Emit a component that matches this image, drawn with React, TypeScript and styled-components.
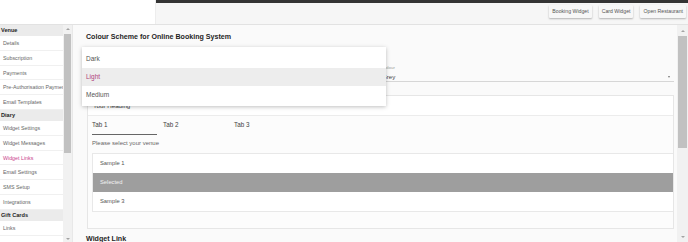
import React from "react";
import styled, { createGlobalStyle } from "styled-components";

const GlobalStyle = createGlobalStyle`
  html, body {
    margin: 0;
    padding: 0;
  }
  body {
    width: 688px;
    height: 242px;
    overflow: hidden;
    background: #ffffff;
    font-family: "Liberation Sans", Arial, sans-serif;
  }
  * {
    box-sizing: border-box;
  }
`;

const Page = styled.div`
  display: flex;
  flex-direction: column;
  width: 688px;
  height: 242px;
  overflow: hidden;
`;

const TopBar = styled.div`
  display: flex;
  height: 25px;
  border-bottom: 1px solid #e2e2e2;
`;

const LogoArea = styled.div`
  width: 156px;
  background: #ffffff;
  border-right: 1px solid #ededed;
`;

const Toolbar = styled.div`
  flex: 1;
  display: flex;
  flex-direction: column;
`;

const DarkStrip = styled.div`
  height: 3px;
  background: #343434;
`;

const ButtonBar = styled.div`
  flex: 1;
  display: flex;
  justify-content: flex-end;
  align-items: flex-start;
  gap: 7px;
  padding: 2px 2px 0 0;
  background: #f6f6f6;
`;

const ToolButton = styled.button`
  height: 13px;
  padding: 0 3px;
  border: none;
  border-radius: 1px;
  background: #f7f7f7;
  box-shadow: 0 1px 2px rgba(0, 0, 0, 0.28);
  font-family: inherit;
  font-size: 5.2px;
  color: #555;
  line-height: 13px;
  cursor: pointer;
`;

const Body = styled.div`
  flex: 1;
  display: flex;
  min-height: 0;
`;

const Sidebar = styled.div`
  width: 72px;
  display: flex;
`;

const SideList = styled.div`
  width: 63px;
  overflow: hidden;
  background: #ffffff;
`;

const SideHeader = styled.div`
  height: 11px;
  padding-left: 1px;
  background: #ebebeb;
  font-size: 5.6px;
  font-weight: bold;
  color: #1e1e1e;
  line-height: 11px;
  white-space: nowrap;
`;

const SideItem = styled.div<{ active?: boolean }>`
  height: 14.8px;
  padding-left: 3px;
  border-bottom: 1px solid #f0f0f0;
  font-size: 5.3px;
  color: ${(p) => (p.active ? "#c9428a" : "#666")};
  line-height: 14px;
  white-space: nowrap;
`;

const ScrollTrack = styled.div<{ w: number }>`
  width: ${(p) => p.w}px;
  display: flex;
  flex-direction: column;
  align-items: center;
  background: #f1f1f1;
`;

const ArrowBox = styled.div<{ h: number }>`
  height: ${(p) => p.h}px;
  width: 100%;
  display: flex;
  align-items: center;
  justify-content: center;
`;

const Arrow = styled.div<{ down?: boolean }>`
  width: 0;
  height: 0;
  border-left: 2px solid transparent;
  border-right: 2px solid transparent;
  ${(p) =>
    p.down
      ? "border-top: 2px solid #a3a3a3;"
      : "border-bottom: 2px solid #a3a3a3;"}
`;

const Thumb = styled.div<{ top: number; h: number }>`
  width: calc(100% - 2px);
  height: ${(p) => p.h}px;
  margin-top: ${(p) => p.top}px;
  background: #c1c1c1;
`;

const Spacer = styled.div`
  flex: 1;
`;

const Main = styled.div`
  flex: 1;
  display: flex;
  background: #fafafa;
  border-left: 1px solid #e8e8e8;
`;

const MainContent = styled.div`
  position: relative;
  flex: 1;
  overflow: hidden;
  padding: 7px 3px 0 9px;
`;

const SectionTitle = styled.div`
  padding-left: 4px;
  height: 10px;
  font-size: 7.1px;
  font-weight: bold;
  color: #1f1f1f;
  line-height: 10px;
  white-space: nowrap;
`;

const SelectRow = styled.div`
  display: flex;
  gap: 8px;
  margin-top: 23px;
`;

const SelectField = styled.div`
  position: relative;
  flex: 1;
  min-height: 17px;
  border-bottom: 1px solid #d6d6d6;
`;

const SelectLabel = styled.div`
  height: 6px;
  font-size: 4.4px;
  color: #9a9a9a;
  line-height: 6px;
`;

const SelectValue = styled.div`
  display: flex;
  align-items: center;
  justify-content: space-between;
  height: 9px;
  margin-top: 1px;
  padding-right: 4px;
  font-size: 6.2px;
  color: #444;
`;

const Caret = styled.div`
  width: 0;
  height: 0;
  border-left: 1.5px solid transparent;
  border-right: 1.5px solid transparent;
  border-top: 2px solid #777;
`;

const Preview = styled.div`
  margin: 13px 0 0 5px;
  border: 1px solid #e6e6e6;
  background: #fcfcfc;
  padding-bottom: 16px;
`;

const PreviewHeading = styled.div`
  height: 20px;
  padding-left: 5px;
  background: #ffffff;
  border-bottom: 1px solid #ececec;
  font-size: 6.2px;
  color: #444;
  line-height: 20px;
`;

const TabRow = styled.div`
  display: flex;
  height: 19px;
  padding-left: 4px;
`;

const Tab = styled.div<{ active?: boolean }>`
  position: relative;
  width: 71px;
  font-size: 6.3px;
  color: #444;
  line-height: 18px;

  &::after {
    content: "";
    display: ${(p) => (p.active ? "block" : "none")};
    position: absolute;
    left: 0;
    bottom: 0;
    width: 65px;
    height: 1px;
    background: #666;
  }
`;

const Hint = styled.div`
  padding-left: 4px;
  height: 16px;
  font-size: 6px;
  color: #666;
  line-height: 16px;
`;

const VenueList = styled.div`
  margin: 2px 0 0 4px;
  border: 1px solid #e8e8e8;
  border-right: none;
  background: #ffffff;
`;

const VenueRow = styled.div<{ selected?: boolean }>`
  height: 19px;
  padding-left: 7px;
  background: ${(p) => (p.selected ? "#9e9e9e" : "transparent")};
  font-size: 5.8px;
  color: ${(p) => (p.selected ? "#f2f2f2" : "#555")};
  line-height: 19px;
`;

const SubTitle = styled(SectionTitle)`
  margin-top: 5px;
`;

const Menu = styled.div`
  position: absolute;
  left: 9px;
  top: 22px;
  width: 304px;
  padding: 2.5px 0;
  background: #ffffff;
  box-shadow: 0 1px 4px rgba(0, 0, 0, 0.25);
`;

const MenuItem = styled.div<{ selected?: boolean }>`
  height: 18px;
  padding-left: 4px;
  background: ${(p) => (p.selected ? "#ededed" : "transparent")};
  font-size: 6.5px;
  color: ${(p) => (p.selected ? "#b0427c" : "#555")};
  line-height: 18px;
`;

const venueNav = ["Details", "Subscription", "Payments", "Pre-Authorisation Payments", "Email Templates"];
const diaryNav = [
  "Widget Settings",
  "Widget Messages",
  "Widget Links",
  "Email Settings",
  "SMS Setup",
  "Integrations",
];

const ScrollBar: React.FC<{ w: number; top: number; h: number; arrowH: number }> = ({
  w,
  top,
  h,
  arrowH,
}) => (
  <ScrollTrack w={w}>
    <ArrowBox h={arrowH}>
      <Arrow />
    </ArrowBox>
    <Thumb top={top} h={h} />
    <Spacer />
    <ArrowBox h={arrowH}>
      <Arrow down />
    </ArrowBox>
  </ScrollTrack>
);

const App: React.FC = () => {
  return (
    <Page>
      <GlobalStyle />
      <TopBar>
        <LogoArea />
        <Toolbar>
          <DarkStrip />
          <ButtonBar>
            <ToolButton>Booking Widget</ToolButton>
            <ToolButton>Card Widget</ToolButton>
            <ToolButton>Open Restaurant</ToolButton>
          </ButtonBar>
        </Toolbar>
      </TopBar>

      <Body>
        <Sidebar>
          <SideList>
            <SideHeader>Venue</SideHeader>
            {venueNav.map((item) => (
              <SideItem key={item}>{item}</SideItem>
            ))}
            <SideHeader>Diary</SideHeader>
            {diaryNav.map((item) => (
              <SideItem key={item} active={item === "Widget Links"}>
                {item}
              </SideItem>
            ))}
            <SideHeader>Gift Cards</SideHeader>
            <SideItem>Links</SideItem>
          </SideList>
          <ScrollBar w={9} arrowH={7} top={2} h={119} />
        </Sidebar>

        <Main>
          <MainContent>
            <SectionTitle>Colour Scheme for Online Booking System</SectionTitle>

            <SelectRow>
              {/* the scheme select sits under its open menu */}
              <SelectField />
              <SelectField>
                <SelectLabel>Colour</SelectLabel>
                <SelectValue>
                  Grey
                  <Caret />
                </SelectValue>
              </SelectField>
            </SelectRow>

            <Preview>
              <PreviewHeading>Your Heading</PreviewHeading>
              <TabRow>
                <Tab active>Tab 1</Tab>
                <Tab>Tab 2</Tab>
                <Tab>Tab 3</Tab>
              </TabRow>
              <Hint>Please select your venue</Hint>
              <VenueList>
                <VenueRow>Sample 1</VenueRow>
                <VenueRow selected>Selected</VenueRow>
                <VenueRow>Sample 3</VenueRow>
              </VenueList>
            </Preview>

            <SubTitle>Widget Link</SubTitle>

            <Menu>
              <MenuItem>Dark</MenuItem>
              <MenuItem selected>Light</MenuItem>
              <MenuItem>Medium</MenuItem>
            </Menu>
          </MainContent>
          <ScrollBar w={11} arrowH={11} top={0} h={112} />
        </Main>
      </Body>
    </Page>
  );
};

export default App;
